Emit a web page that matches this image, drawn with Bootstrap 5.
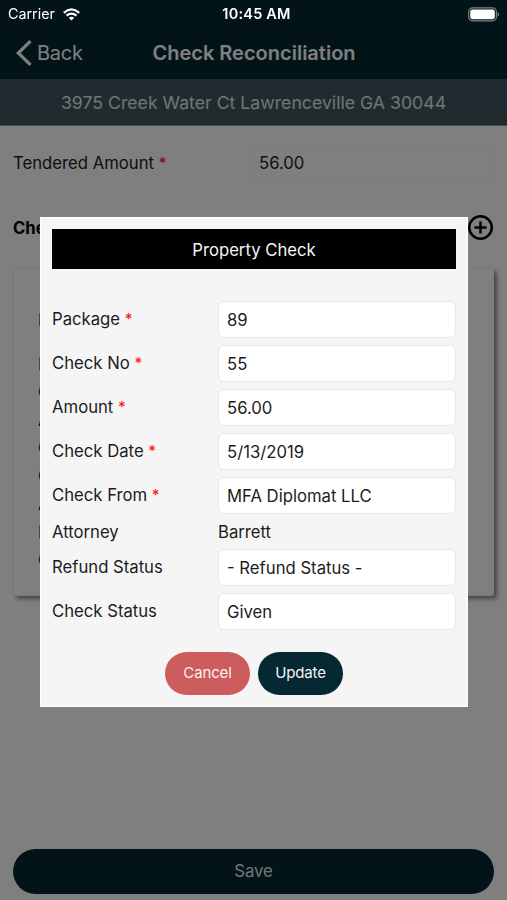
<!DOCTYPE html>
<html lang="en">
<head>
<meta charset="utf-8">
<meta name="viewport" content="width=device-width, initial-scale=1">
<title>Check Reconciliation</title>
<link href="https://cdn.jsdelivr.net/npm/bootstrap@5.3.0/dist/css/bootstrap.min.css" rel="stylesheet">
<style>
  :root { --navy: #062833; }
  body { font-family: Inter, "Liberation Sans", sans-serif; font-size: 16.7px; line-height: 22px; color: #1c1c1c; background: #fff; }
  .screen { height: 900px; }
  .app-head { background: var(--navy); color: #fff; height: 79px; }
  .status-line { height: 27px; padding: 1px 8px 0 8px; font-size: 14.3px; color: #fff; z-index: 1070; }
  .status-line .clock { font-weight: 600; font-size: 14.5px; letter-spacing: .2px; padding-left: 6px; }
  .title-line { height: 52px; padding-left: 15px; padding-right: 15px; }
  .title-line .title { font-size: 20px; font-weight: 600; letter-spacing: 0; padding-left: 1px; }
  .title-line .back { font-size: 20px; letter-spacing: -.25px; }
  .title-line .back span { margin-left: 5px; }
  .address { background: #3e575f; color: #e2e6e8; height: 47px; padding-top: 1px; font-size: 17.7px; border-bottom: 1px solid #8a979c; }
  .req { color: #ff1a1a; font-size: 15px; font-weight: 500; position: relative; top: -1px; }
  .page { padding: 18px 13px 6px; }
  .form-control { height: 37px; font-size: 16.7px; color: #1c1c1c; border-color: #e8e8e8; border-radius: 6px; padding: 0 8px; }
  .form-control.tendered { width: 245px; height: 38px; border-color: #f5f5f5; padding-left: 9px; }
  .check-card { height: 328px; margin-top: 27px; border-radius: 3px; border: 1px solid #f2f2f2; box-shadow: 3px 3px 4px rgba(0,0,0,.45); padding: 37px 24px 0; line-height: 28px; }
  .save { height: 45px; background: var(--navy); color: #e4e9eb; font-size: 16.7px; padding-top: 7px; }
  .dim { background: rgba(0,0,0,.5); z-index: 1050; }
  .dialog { width: 428px; height: 490px; margin: 217px 0 0 40px; padding: 11px 11px 0; background: #f5f5f5; border: 1px solid #fff; }
  .dialog-title { height: 40px; padding-top: 1px; background: #000; color: #f4f4f4; margin-bottom: 32px; }
  .field { height: 37px; margin-bottom: 7px; }
  .field.plain { height: 22px; margin: 0 0 6px; }
  .field > label, .field > .field-label { width: 166px; flex: none; }
  .field > label { padding-bottom: 1px; }
  .actions { margin-top: 22px; gap: 8px; }
  .actions .btn, .save.btn { border: 0; }
  .actions .btn { width: 85px; height: 43px; padding: 0; font-size: 15px; letter-spacing: -.15px; color: #f4f4f4; }
  .cancel { background: #cd5c5c; }
  .update { background: var(--navy); }
</style>
<script src="https://cdn.jsdelivr.net/npm/bootstrap@5.3.0/dist/js/bootstrap.bundle.min.js"></script>
</head>
<body>
<div class="screen d-flex flex-column overflow-hidden">
  <header class="app-head">
    <div class="status-line position-relative row g-0 align-items-center">
      <div class="col d-flex align-items-center">
        <span>Carrier</span>
        <svg class="ms-2" width="17" height="13" viewBox="0 0 17 13" fill="none" stroke="#fff" stroke-width="2.2"><path d="M.8 4.800Q8.500-1.900 16.200 4.800M3.500 7.700Q8.500 3.400 13.500 7.700"/><path d="M8.500 12.600 5.800 9.800Q8.500 7.700 11.200 9.800Z" fill="#fff" stroke="none"/></svg>
      </div>
      <div class="col-auto clock">10:45 AM</div>
      <div class="col text-end d-flex justify-content-end">
        <svg width="31" height="15" viewBox="0 0 32 15"><rect x=".7" y=".7" width="28.600" height="13.300" rx="4" fill="none" stroke="#7d8587" stroke-width="1.200"/><rect x="2.300" y="2.300" width="25.400" height="10.100" rx="2.400" fill="#fff"/><path d="M30.500 5q1.500.8 1.500 2.400t-1.500 2.400z" fill="#7d8587"/></svg>
      </div>
    </div>
    <div class="title-line row g-0 align-items-center">
      <div class="col d-flex align-items-center back">
        <svg width="17" height="26" viewBox="0 0 17 26" fill="none" stroke="#fff" stroke-width="3.200"><path d="M15.500 1.200 3.300 13l12.200 11.800"/></svg>
        <span>Back</span>
      </div>
      <div class="col-auto title">Check Reconciliation</div>
      <div class="col"></div>
    </div>
  </header>
  <div class="address d-flex align-items-center justify-content-center">3975 Creek Water Ct Lawrenceville GA 30044</div>

  <main class="page flex-fill d-flex flex-column">
    <div class="d-flex align-items-center justify-content-between">
      <label for="tendered">Tendered Amount <span class="req">*</span></label>
      <input id="tendered" class="form-control tendered" value="56.00">
    </div>
    <div class="d-flex align-items-center justify-content-between mt-4 pt-2">
      <span class="fw-bold text-black">Che</span>
      <svg width="27" height="27" viewBox="0 0 27 27" fill="none" stroke="#000" stroke-width="2.500"><circle cx="13.500" cy="13.500" r="11.300"/><path d="M13.500 7.500v12M7.500 13.500h12"/></svg>
    </div>
    <div class="check-card">
      <div class="mb-3">P</div>
      <div>P</div>
      <div>C</div>
      <div>A</div>
      <div>C</div>
      <div>C</div>
      <div>A</div>
      <div>R</div>
      <div>C</div>
    </div>
    <button class="btn rounded-pill save mt-auto w-100">Save</button>
  </main>
</div>

<div class="dim position-fixed top-0 start-0 w-100 h-100">
  <section class="dialog" role="dialog" aria-label="Property Check">
    <div class="dialog-title d-flex align-items-center justify-content-center">Property Check</div>
    <div class="field d-flex align-items-center"><label for="package">Package <span class="req">*</span></label><input id="package" class="form-control" value="89"></div>
    <div class="field d-flex align-items-center"><label for="no">Check No <span class="req">*</span></label><input id="no" class="form-control" value="55"></div>
    <div class="field d-flex align-items-center"><label for="amount">Amount <span class="req">*</span></label><input id="amount" class="form-control" value="56.00"></div>
    <div class="field d-flex align-items-center"><label for="date">Check Date <span class="req">*</span></label><input id="date" class="form-control" value="5/13/2019"></div>
    <div class="field d-flex align-items-center"><label for="from">Check From <span class="req">*</span></label><input id="from" class="form-control" value="MFA Diplomat LLC"></div>
    <div class="field plain d-flex align-items-center"><span class="field-label">Attorney</span><span>Barrett</span></div>
    <div class="field d-flex align-items-center"><label for="refund">Refund Status</label><input id="refund" class="form-control" value="- Refund Status -"></div>
    <div class="field d-flex align-items-center"><label for="status">Check Status</label><input id="status" class="form-control" value="Given"></div>
    <div class="actions d-flex justify-content-center">
      <button class="btn rounded-pill cancel">Cancel</button>
      <button class="btn rounded-pill update">Update</button>
    </div>
  </section>
</div>
</body>
</html>
